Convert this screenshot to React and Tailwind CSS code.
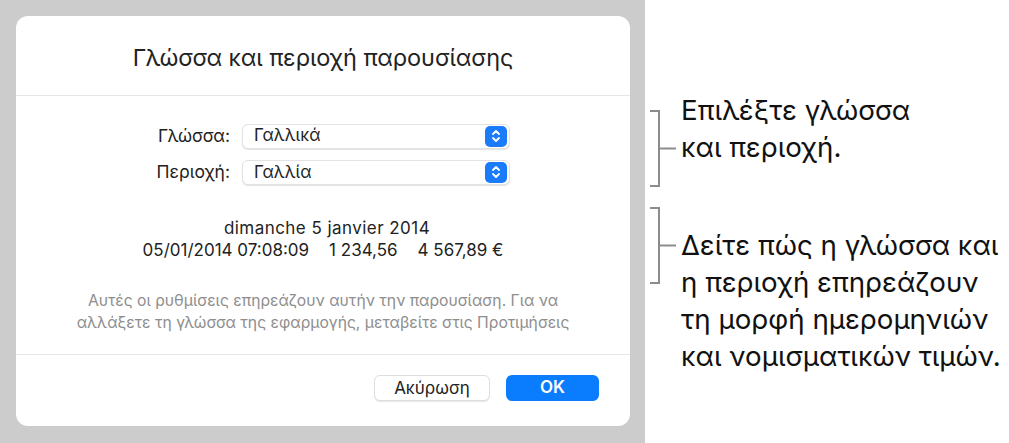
import React from "react";

function Stepper() {
  return (
    <div className="w-[22px] h-[21px] rounded-[5px] bg-[#1a7cfa] flex items-center justify-center">
      <svg width="10" height="14" viewBox="0 0 10 14" fill="none" stroke="white" strokeWidth="1.8" strokeLinecap="round" strokeLinejoin="round">
        <path d="M2 5 L5 2 L8 5" />
        <path d="M2 9 L5 12 L8 9" />
      </svg>
    </div>
  );
}

function Select({ value }) {
  return (
    <div className="h-[25px] w-[268px] bg-white rounded-[6px] border border-[#e3e3e3] shadow-[0_1px_1px_rgba(0,0,0,0.12)] flex items-center justify-between pl-[11px] pr-[2px]">
      <span className="text-[17px] text-[#222]">{value}</span>
      <Stepper />
    </div>
  );
}

function Bracket({ height }) {
  return (
    <svg className="shrink-0" width="30" height={height} viewBox={`0 0 30 ${height}`} fill="none" stroke="#8c8c8c" strokeWidth="2">
      <path d={`M4 1 H13 V${height - 1} H4`} />
      <path d={`M13 ${height / 2} H31`} />
    </svg>
  );
}

export default function App() {
  return (
    <div className="w-[1009px] h-[443px] flex bg-white" style={{ fontFamily: "Inter, 'Noto Sans', sans-serif" }}>
      {/* left: dialog on gray */}
      <div className="w-[645px] h-full bg-[#cccccc] pt-[16px] pl-[16px]">
        <div className="w-[614px] h-[410px] bg-white rounded-[12px] flex flex-col">
          <div className="h-[80px] flex items-center justify-center border-b border-[#e6e6e6] pt-[4px]">
            <h1 className="text-[23.5px] text-[#222] tracking-[-0.1px]">Γλώσσα και περιοχή παρουσίασης</h1>
          </div>

          <div className="mt-[27px] ml-[120px] grid grid-cols-[94px_268px] gap-x-[12px] gap-y-[10px] items-center">
            <span className="text-[17.5px] text-[#222] text-right">Γλώσσα:</span>
            <Select value="Γαλλικά" />
            <span className="text-[17.5px] text-[#222] text-right">Περιοχή:</span>
            <Select value="Γαλλία" />
          </div>

          <div className="mt-[31px] flex flex-col items-center text-[17px] text-[#222] leading-[22px]">
            <span className="pl-[8px] tracking-[0.45px]">dimanche 5 janvier 2014</span>
            <div className="flex gap-[20px]">
              <span>05/01/2014 07:08:09</span>
              <span>1 234,56</span>
              <span>4 567,89 €</span>
            </div>
          </div>

          <div className="mt-[29px] text-center text-[15.7px] leading-[22px] text-[#8e8e8e]">
            <p>Αυτές οι ρυθμίσεις επηρεάζουν αυτήν την παρουσίαση. Για να</p>
            <p>αλλάξετε τη γλώσσα της εφαρμογής, μεταβείτε στις Προτιμήσεις</p>
          </div>

          <div className="mt-[20px] border-t border-[#e6e6e6]" />

          <div className="mt-[20px] flex justify-end gap-[16px] pr-[31px]">
            <button className="w-[116px] h-[26px] rounded-[6px] bg-white border border-[#dedede] shadow-[0_1px_1px_rgba(0,0,0,0.1)] text-[17px] text-[#222]">
              Ακύρωση
            </button>
            <button className="w-[93px] h-[26px] rounded-[6px] bg-[#0a7cfe] text-white text-[17px] font-semibold">
              OK
            </button>
          </div>
        </div>
      </div>

      {/* right: annotations */}
      <div className="flex-1 pl-[1px] pt-[110px] text-[27.7px] leading-[37px] text-[#111]">
        <div className="flex items-start h-[77px]">
          <Bracket height={77} />
          <div className="-mt-[18px] pl-[5px]">
            <p>Επιλέξτε γλώσσα</p>
            <p>και περιοχή.</p>
          </div>
        </div>
        <div className="mt-[20px] flex items-start">
          <Bracket height={77} />
          <div className="mt-[20px] pl-[5px] whitespace-nowrap">
            <p>Δείτε πώς η γλώσσα και</p>
            <p>η περιοχή επηρεάζουν</p>
            <p>τη μορφή ημερομηνιών</p>
            <p>και νομισματικών τιμών.</p>
          </div>
        </div>
      </div>
    </div>
  );
}
